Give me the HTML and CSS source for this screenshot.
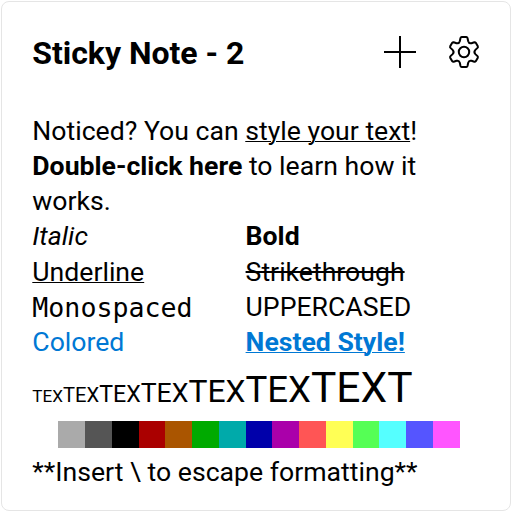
FILE: index.html
```html
<!DOCTYPE html>
<html lang="en">
<head>
<meta charset="utf-8">
<title>Sticky Note - 2</title>
<link rel="stylesheet" href="styles.css">
</head>
<body>
<main class="note">
  <header class="bar">
    <h1 class="title">Sticky Note - 2</h1>
    <div class="actions">
      <svg class="icon" viewBox="0 0 32 32"><path d="M16 0V32M0 16H32"/></svg>
      <svg class="icon" viewBox="0 0 32 32"><circle cx="16" cy="16" r="5.2"/><path d="M13.7 1H18.3Q19.2 1 19.5 2L20.2 5.2Q21 7.9 23.5 7.2L26.3 6.2Q27.2 6 27.8 6.8L29.8 10.3Q30.2 11.2 29.5 11.9L27.4 13.9Q25.4 16 27.4 18.1L29.5 20.1Q30.2 20.8 29.8 21.7L27.8 25.2Q27.2 26 26.3 25.8L23.5 24.8Q21 24.1 20.2 26.8L19.5 30Q19.2 31 18.3 31H13.7Q12.8 31 12.5 30L11.8 26.8Q11 24.1 8.5 24.8L5.7 25.8Q4.8 26 4.2 25.2L2.2 21.7Q1.8 20.8 2.5 20.1L4.6 18.1Q6.6 16 4.6 13.9L2.5 11.9Q1.8 11.2 2.2 10.3L4.2 6.8Q4.8 6 5.7 6.2L8.5 7.2Q11 7.9 11.8 5.2L12.5 2Q12.8 1 13.7 1Z"/></svg>
    </div>
  </header>
  <section class="content">
    <p>Noticed? You can <u>style your text</u>!<br><b>Double-click here</b> to learn how it<br>works.</p>
    <div class="samples">
      <span><i>Italic</i></span><span><b>Bold</b></span>
      <span><u>Underline</u></span><span><s>Strikethrough</s></span>
      <span class="mono">Monospaced</span><span>UPPERCASED</span>
      <span class="blue">Colored</span><span class="blue"><b><u>Nested Style!</u></b></span>
    </div>
    <p class="sizes"><span class="s1">TEX</span><span class="s2">TEX</span><span class="s3">TEX</span><span class="s4">TEX</span><span class="s5">TEX</span><span class="s6">TEX</span><span class="s7">TEXT</span></p>
    <div class="palette"><i class="c1"></i><i class="c2"></i><i class="c3"></i><i class="c4"></i><i class="c5"></i><i class="c6"></i><i class="c7"></i><i class="c8"></i><i class="c9"></i><i class="c10"></i><i class="c11"></i><i class="c12"></i><i class="c13"></i><i class="c14"></i><i class="c15"></i></div>
    <p>**Insert \ to escape formatting**</p>
  </section>
</main>
</body>
</html>
```
FILE: styles.css
```css
* { box-sizing: border-box; }
body { margin: 0; height: 512px; padding: 1px; background: #fff; overflow: hidden; font-family: Roboto, "Liberation Sans", sans-serif; color: #000; }
.note { height: 510px; border: 1px solid #e5e5e5; border-radius: 8px; padding: 0 30.3px; background: #fff; }
.bar { height: 100px; display: flex; align-items: center; justify-content: space-between; }
.title { margin: 0; padding-top: 2px; font-size: 32px; line-height: 40px; font-weight: 700; letter-spacing: -0.03px; }
.actions { display: flex; gap: 32px; }
.icon { width: 32px; height: 32px; fill: none; stroke: #000; stroke-width: 2; }
.content { padding-top: 11.8px; font-size: 26.63px; line-height: 35.2px; white-space: nowrap; }
p { margin: 0; }
u { text-decoration-thickness: 1.33px; }
.samples { display: grid; grid-template-columns: 213.3px 1fr; }
.mono { font-family: "DejaVu Sans Mono", monospace; }
.blue { color: #0078d4; }
.sizes { height: 61px; line-height: 56px; }
.s1 { font-size: 17.1px; }
.s2 { font-size: 20.2px; }
.s3 { font-size: 23.2px; }
.s4 { font-size: 26.67px; }
.s5 { font-size: 31.8px; }
.s6 { font-size: 36.6px; }
.s7 { font-size: 42.5px; }
.palette { display: flex; height: 27px; margin: 0 0 7px 26.2px; }
.palette i { width: 26.75px; }
.c1 { background: #aaa; }
.c2 { background: #555; }
.c3 { background: #000; }
.c4 { background: #a00; }
.c5 { background: #a50; }
.c6 { background: #0a0; }
.c7 { background: #0aa; }
.c8 { background: #00a; }
.c9 { background: #a0a; }
.c10 { background: #f55; }
.c11 { background: #ff5; }
.c12 { background: #5f5; }
.c13 { background: #5ff; }
.c14 { background: #55f; }
.c15 { background: #f5f; }
```
